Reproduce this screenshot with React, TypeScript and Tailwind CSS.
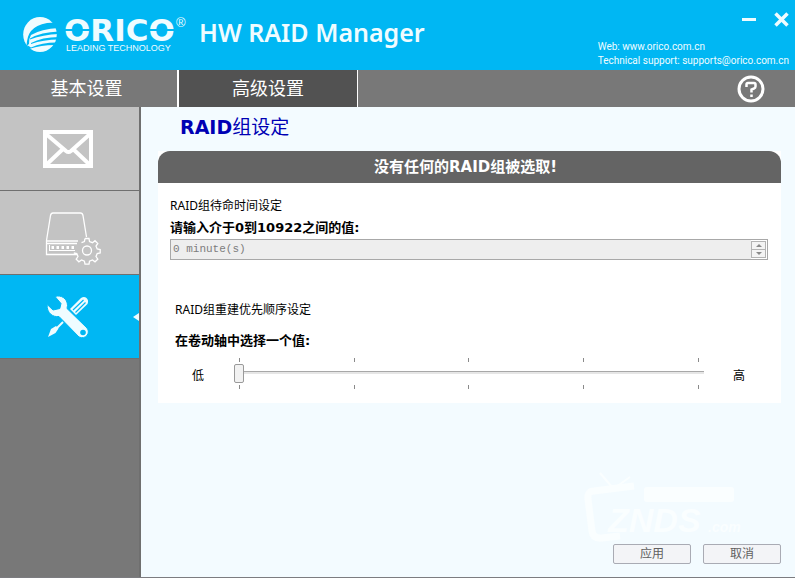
import { ReactNode, useState } from "react";

const latin = "font-['Noto_Sans','Noto_Sans_CJK_SC',sans-serif]";
const verdana = "font-['DejaVu_Sans','Noto_Sans_CJK_SC',sans-serif]";

function OricoLogo() {
  return (
    <svg width="166" height="42" viewBox="0 0 166 42" className="overflow-visible" role="img" aria-label="ORICO Leading Technology">
      {/* globe */}
      <g transform="translate(0 1)">
        <ellipse cx="17" cy="17.500" rx="16.800" ry="17.500" fill="#effcff" />
        <path fill="#00b7f3" d="M36 7Q30 5 24 6 13 8 8 14 4 19 3.500 29L6 27Q5.500 22 8 18 18 12 36 11z" />
        <path fill="#00b7f3" d="M36 14.500Q18 15 7 21.500L7 22.500Q20 17.500 36 17z" />
        <path fill="#00b7f3" d="M36 20Q19 20 8 26L8 27Q20 22.500 36 22.500z" />
        <path fill="#00b7f3" d="M36 25.500Q20 25 8 30.500L4 28 6 32Q20 27.500 34 28z" />
      </g>
      <text x="41" y="25" fontSize="31" fontWeight="700" fill="#effcff" fontFamily="'DejaVu Sans', sans-serif">
        ORICO
      </text>
      {/* stencil cuts */}
      <path stroke="#00b7f3" strokeWidth="2" d="M41 14h10M59 14h9M123 14h11M142 14h9" />
      <text x="43" y="35" fontSize="9" fill="#effcff" fontFamily="'Liberation Sans', sans-serif">
        LEADING TECHNOLOGY
      </text>
      <text x="153" y="11" fontSize="13" fill="#effcff" fontFamily="'Liberation Sans', sans-serif">
        ®
      </text>
    </svg>
  );
}

function MailIcon() {
  return (
    <svg width="50" height="38" viewBox="0 0 50 38" fill="none" stroke="#fff" strokeWidth="4">
      <rect x="2" y="2" width="46" height="34" />
      <path d="M3 4l20 17q2.500 2 5 0L47 4M3 35l17-16M47 35L30 19" />
    </svg>
  );
}

function DriveIcon() {
  return (
    <svg width="56" height="54" viewBox="0 0 56 54" fill="none" stroke="#fff" strokeWidth="1.300">
      <path d="M32 42.500H1.500V28.500L5.500 3.500Q6 1 8 1H35.500Q37.500 1 38 3.500L41.500 25M1.500 29H33M1.500 31.500H32" />
      <path strokeWidth="1" d="M4 38.500H30M4.500 33v5" />
      <path strokeWidth="3" strokeDasharray="2.500 2.500" d="M6.500 35.500H29" />
      <circle cx="42" cy="38.500" r="4.500" />
      <path d="M40 26.500h4l.5 3 3 1.200 2.500-2 2.800 2.800-1.800 2.500 1.200 3 3 .5v3.500l-3 .6-1.200 2.900 1.800 2.600-2.800 2.700-2.500-1.800-3 1.200-.5 3h-4l-.6-3-2.900-1.200-2.600 1.800-2.700-2.700 1.800-2.600-1.200-2.900-3-.6M40 26.500l-.6 3-2.900 1.200" />
    </svg>
  );
}

function ToolsIcon() {
  return (
    <svg width="42" height="42" viewBox="0 0 42 42">
      {/* screwdriver */}
      <path stroke="#effcff" strokeWidth="2" d="M6 36L16 26" />
      <path fill="#effcff" d="M1 41l3-8 5-3 2.500 2.500L8.500 37z" />
      <path fill="#effcff" d="M23 13L34 2q3-2 5.500 0t1 6L29 19z" />
      <path stroke="#00b7f3" strokeWidth="1.200" d="M26 14L36.500 4M28.500 16.500L38.500 6.500" />
      {/* wrench */}
      <path
        fill="#effcff"
        stroke="#00b7f3"
        strokeWidth="1"
        d="M8 .5C14-1.500 20.500 2.500 20.500 9.500l-.5 3L40 32c4 5-1.500 12-8 9L12 20.500C6 21.500-.5 17 .2 8.500l5.800 5.500 6.800-1.500 1.200-5z"
      />
      <circle cx="36" cy="36.500" r="2.800" fill="#00b7f3" />
    </svg>
  );
}

function Watermark() {
  return (
    <svg width="165" height="80" viewBox="0 0 165 80" fill="none" stroke="#fafeff" aria-hidden="true">
      <path strokeWidth="7" d="M52 17L12 22Q5 22 6 30L10 62Q11 70 20 69L38 67" />
      <path strokeWidth="2" d="M30 18L18 4M34 18L48 8" />
      <rect x="62" y="18" width="90" height="15" rx="3" fill="#fafeff" stroke="none" />
      <text x="26" y="63" fontSize="34" fontWeight="700" fontStyle="italic" fill="#fafeff" stroke="none" fontFamily="'Liberation Sans', sans-serif">
        ZNDS
      </text>
      <text x="126" y="63" fontSize="14" fontWeight="700" fontStyle="italic" fill="#fafeff" stroke="none" fontFamily="'Liberation Sans', sans-serif">
        .com
      </text>
    </svg>
  );
}

interface SideButtonProps {
  label: string;
  active?: boolean;
  onClick: () => void;
  children: ReactNode;
}

function SideButton({ label, active, onClick, children }: SideButtonProps) {
  return (
    <button
      aria-label={label}
      onClick={onClick}
      className={`relative flex h-[84px] w-full items-center justify-center border-b border-[#6f6f6f] pr-[3px] pt-px ${
        active ? "bg-[#00b7f3]" : "bg-[#c3c3c3]"
      }`}
    >
      {children}
      {active && (
        <span className="absolute right-0 border-y-4 border-r-6 border-y-transparent border-r-[#effcff]"></span>
      )}
    </button>
  );
}

function Ticks() {
  return (
    <div className="flex justify-between px-[5px]">
      {[0, 1, 2, 3, 4].map((n) => (
        <span key={n} className="h-1 w-px bg-[#8a8a8a]"></span>
      ))}
    </div>
  );
}

export default function App() {
  const [page, setPage] = useState("tools");
  const [priority, setPriority] = useState(0);

  return (
    <div className={`flex min-h-screen flex-col border-b border-[#7c7c80] bg-[#f3fbff] ${latin}`}>
      {/* Header */}
      <header className="flex h-[70px] justify-between bg-[#00b7f3] text-[#effcff]">
        <div className="flex items-start pt-4 pl-[23px]">
          <OricoLogo />
          <h1 className="ml-[10px] text-[25px] leading-8 font-semibold">HW RAID Manager</h1>
        </div>
        <div className="flex flex-col items-end justify-between pt-3 pr-[6px] pb-[2px]">
          <div className="flex gap-[18px]">
            <button aria-label="Minimize">
              <svg width="14" height="14" viewBox="0 0 14 14" stroke="currentColor" strokeWidth="3">
                <path d="M0 6.500h14" />
              </svg>
            </button>
            <button aria-label="Close">
              <svg width="15" height="15" viewBox="0 0 15 15" stroke="currentColor" strokeWidth="3.500">
                <path d="M1.500 1.500l12 12M13.500 1.500l-12 12" />
              </svg>
            </button>
          </div>
          <address className="font-[Roboto,sans-serif] text-[10px] leading-[14px] not-italic">
            <p>
              Web: <a href="http://www.orico.com.cn">www.orico.com.cn</a>
            </p>
            <p>
              Technical support: <a href="mailto:supports@orico.com.cn">supports@orico.com.cn</a>
            </p>
          </address>
        </div>
      </header>

      {/* Tabs */}
      <nav className="flex h-[37px] bg-[#787878] text-lg text-white">
        <button className="w-[177px] pr-1 pb-[2px]">基本设置</button>
        <button className="w-[181px] border-r border-l-2 border-white bg-[#525252] pb-[2px]">高级设置</button>
        <button aria-label="Help" className="mr-[30px] ml-auto">
          <svg width="28" height="28" viewBox="0 0 28 28" fill="none" stroke="#fff" strokeWidth="3">
            <circle cx="14" cy="14" r="12" />
            <path strokeWidth="2.500" d="M9.500 12V9.500Q9.500 8 11 8H17Q18.500 8 18.500 9.500V11.500Q18.500 13 17 13.500L14.500 14.500V17.500M14.500 19.500v2.500" />
          </svg>
        </button>
      </nav>

      <div className="flex flex-1">
        {/* Sidebar */}
        <aside className="w-[141px] shrink-0 border-r-2 border-[#6f6f6f] bg-[#787878]">
          <SideButton label="邮件" active={page === "mail"} onClick={() => setPage("mail")}>
            <MailIcon />
          </SideButton>
          <SideButton label="磁盘" active={page === "drive"} onClick={() => setPage("drive")}>
            <span className="pt-3 pl-[10px]">
              <DriveIcon />
            </span>
          </SideButton>
          <SideButton label="工具" active={page === "tools"} onClick={() => setPage("tools")}>
            <ToolsIcon />
          </SideButton>
        </aside>

        {/* Content */}
        <main className="relative flex flex-1 flex-col pr-[14px] pb-[13px] pl-[17px] text-xs text-black">
          <h2 className={`pt-1 pl-[22px] text-[19px] leading-8 text-[#0000b4] ${verdana}`}>
            <b>RAID</b>组设定
          </h2>

          <section className="mt-2 bg-white pb-[14px]">
            <h3 className={`rounded-t-xl bg-[#646464] pr-2 text-center text-[15px] leading-8 font-bold text-white ${verdana}`}>
              没有任何的RAID组被选取!
            </h3>

            <div className="pt-3 pr-[13px] pl-3">
              <p className="leading-[22px]">RAID组待命时间设定</p>
              <label htmlFor="standby" className={`block text-[13px] leading-[22px] font-bold ${verdana}`}>
                请输入介于0到10922之间的值:
              </label>
              <div className="flex h-[21px] border border-[#a8a8a8] bg-[#eeeeee]">
                <input
                  id="standby"
                  disabled
                  value="0 minute(s)"
                  className="min-w-0 flex-1 px-[2px] font-['Liberation_Mono',monospace] text-[11px] text-[#7d7d7d]"
                />
                <div className="flex w-4 flex-col bg-white py-px pr-px">
                  <button disabled aria-label="增加" className="flex flex-1 items-center justify-center border border-[#b4b4b4] bg-[#f4f4f4]">
                    <span className="border-x-3 border-b-3 border-x-transparent border-b-[#8a8a8a]"></span>
                  </button>
                  <button disabled aria-label="减少" className="flex flex-1 items-center justify-center border border-t-0 border-[#b4b4b4] bg-[#f4f4f4]">
                    <span className="border-x-3 border-t-3 border-x-transparent border-t-[#8a8a8a]"></span>
                  </button>
                </div>
              </div>
            </div>

            <div className="pt-10 pl-[17px]">
              <p className="leading-5">RAID组重建优先顺序设定</p>
              <label htmlFor="priority" className={`mt-[11px] block text-[13px] leading-5 font-bold ${verdana}`}>
                在卷动轴中选择一个值:
              </label>
              <div className="mt-[7px] flex items-center pr-9 pl-[17px]">
                <span className="pt-[5px]">低</span>
                <div className="mr-[29px] ml-[30px] flex-1">
                  <Ticks />
                  <input
                    id="priority"
                    type="range"
                    min="0"
                    max="4"
                    value={priority}
                    onChange={(e) => setPriority(Number(e.target.value))}
                    className="mb-[3px] block h-5 w-full appearance-none bg-transparent [&::-webkit-slider-runnable-track]:h-[3px] [&::-webkit-slider-runnable-track]:border-t [&::-webkit-slider-runnable-track]:border-[#a8a8a8] [&::-webkit-slider-runnable-track]:bg-[#e6e6e6] [&::-webkit-slider-thumb]:-mt-2 [&::-webkit-slider-thumb]:h-[19px] [&::-webkit-slider-thumb]:w-[10px] [&::-webkit-slider-thumb]:appearance-none [&::-webkit-slider-thumb]:rounded-xs [&::-webkit-slider-thumb]:border [&::-webkit-slider-thumb]:border-[#9a9a9a] [&::-webkit-slider-thumb]:bg-[#f2f2f2]"
                  />
                  <Ticks />
                </div>
                <span className="pt-[5px]">高</span>
              </div>
            </div>
          </section>

          <div className="absolute right-12 bottom-7">
            <Watermark />
          </div>
          <div className="relative mt-auto flex justify-end gap-3">
            <button className="h-5 w-[78px] rounded-xs border border-[#a9abb4] bg-[#f3f4f7] text-[#606060]">应用</button>
            <button className="h-5 w-[78px] rounded-xs border border-[#a9abb4] bg-[#f3f4f7] text-[#606060]">取消</button>
          </div>
        </main>
      </div>
    </div>
  );
}
